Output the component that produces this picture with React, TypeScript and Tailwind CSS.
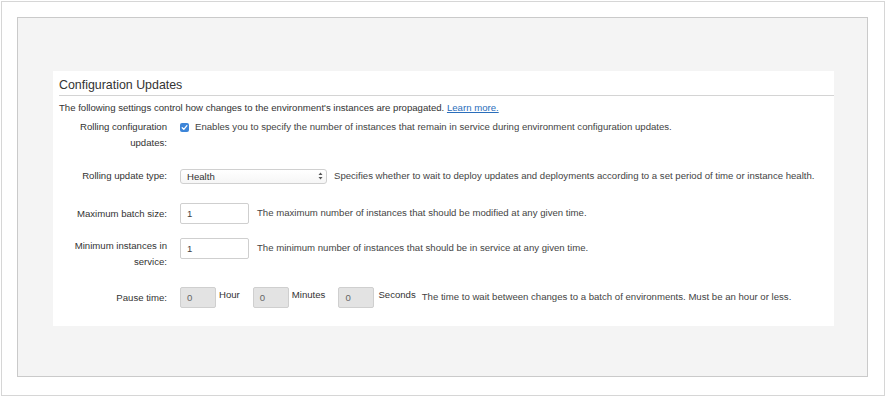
import React from 'react'

const font = { fontFamily: '"Liberation Sans", Arial, Helvetica, sans-serif' }

function Label({ children }: { children: React.ReactNode }) {
  return (
    <div className="w-[108px] shrink-0 text-right text-[9.6px] leading-[16px] text-[#333]">{children}</div>
  )
}

function Checkbox() {
  return (
    <svg width="9" height="9" viewBox="0 0 9 9" className="shrink-0">
      <rect x="0" y="0" width="9" height="9" rx="2" fill="#3d85d8" />
      <path d="M2.2 4.7 L3.8 6.3 L6.9 2.7" stroke="#fff" strokeWidth="1.3" fill="none" strokeLinecap="round" strokeLinejoin="round" />
    </svg>
  )
}

function TextBox({ value, small }: { value: string; small?: boolean }) {
  return (
    <div
      className={
        small
          ? 'w-[36px] h-[21px] shrink-0 border border-[#cfcfcf] bg-[#e3e3e3] rounded-[2px] pl-[6px] text-[9.6px] leading-[19px] text-[#666]'
          : 'w-[69px] h-[21px] shrink-0 border border-[#cfcfcf] bg-white rounded-[2px] pl-[6px] text-[9.6px] leading-[19px] text-[#444]'
      }
    >
      {value}
    </div>
  )
}

export default function App() {
  return (
    <div className="w-[885px] h-[396px] bg-white pt-px pl-px" style={font}>
      <div className="w-[884px] h-[395px] border border-[#d6d6d6] pt-[15px] pl-[15px]">
        <div className="w-[851px] h-[360px] border border-[#cacaca] bg-[#f4f4f4] pt-[53px] pl-[35px]">
          <div className="w-[781px] h-[255px] bg-white pl-[6px] pt-[6px] whitespace-nowrap">
            {/* Header */}
            <div className="border-b border-[#d4d4d4] pb-[2px]">
              <h2 className="text-[12.4px] leading-[16px] text-[#333]">Configuration Updates</h2>
            </div>
            <p className="mt-[5px] text-[9.6px] leading-[14px] text-[#333]">
              The following settings control how changes to the environment's instances are propagated.{' '}
              <span className="text-[#2a6ebb] underline">Learn more.</span>
            </p>

            {/* Rolling configuration */}
            <div className="mt-[4px] flex gap-[13px]">
              <Label>
                Rolling configuration
                <br />
                updates:
              </Label>
              <div className="flex items-center gap-[6px] h-[16px] text-[9.6px] text-[#444]">
                <Checkbox />
                <span>Enables you to specify the number of instances that remain in service during environment configuration updates.</span>
              </div>
            </div>

            {/* Rolling update type */}
            <div className="mt-[17px] flex items-center gap-[13px]">
              <Label>Rolling update type:</Label>
              <div className="flex items-center gap-[7px] text-[9.6px] text-[#444]">
                <div className="w-[147px] h-[15px] border border-[#d0d0d0] rounded-[3px] bg-gradient-to-b from-white to-[#f6f6f6] flex items-center justify-between pl-[6px] pr-[3px] leading-[13px] text-[#333]">
                  <span>Health</span>
                  <svg width="5" height="8" viewBox="0 0 5 8">
                    <path d="M0.5 3 L2.5 0.5 L4.5 3 Z M0.5 5 L2.5 7.5 L4.5 5 Z" fill="#555" />
                  </svg>
                </div>
                <span>Specifies whether to wait to deploy updates and deployments according to a set period of time or instance health.</span>
              </div>
            </div>

            {/* Maximum batch size */}
            <div className="mt-[19px] flex items-center gap-[13px]">
              <Label>Maximum batch size:</Label>
              <div className="flex items-center gap-[8px] text-[9.6px] text-[#444]">
                <TextBox value="1" />
                <span>The maximum number of instances that should be modified at any given time.</span>
              </div>
            </div>

            {/* Minimum instances */}
            <div className="mt-[14px] flex items-start gap-[13px]">
              <Label>
                Minimum instances in
                <br />
                service:
              </Label>
              <div className="flex items-center gap-[8px] text-[9.6px] text-[#444]">
                <TextBox value="1" />
                <span>The minimum number of instances that should be in service at any given time.</span>
              </div>
            </div>

            {/* Pause time */}
            <div className="mt-[17px] flex items-center gap-[13px]">
              <Label>Pause time:</Label>
              <div className="flex items-center text-[9.6px] text-[#444]">
                <TextBox value="0" small />
                <span className="ml-[3px] mb-[5px] text-[#333]">Hour</span>
                <div className="ml-[13px]"><TextBox value="0" small /></div>
                <span className="ml-[3px] mb-[5px] text-[#333]">Minutes</span>
                <div className="ml-[13px]"><TextBox value="0" small /></div>
                <span className="ml-[4px] mb-[5px] text-[#333]">Seconds</span>
                <span className="ml-[6px]">The time to wait between changes to a batch of environments. Must be an hour or less.</span>
              </div>
            </div>
          </div>
        </div>
      </div>
    </div>
  )
}
